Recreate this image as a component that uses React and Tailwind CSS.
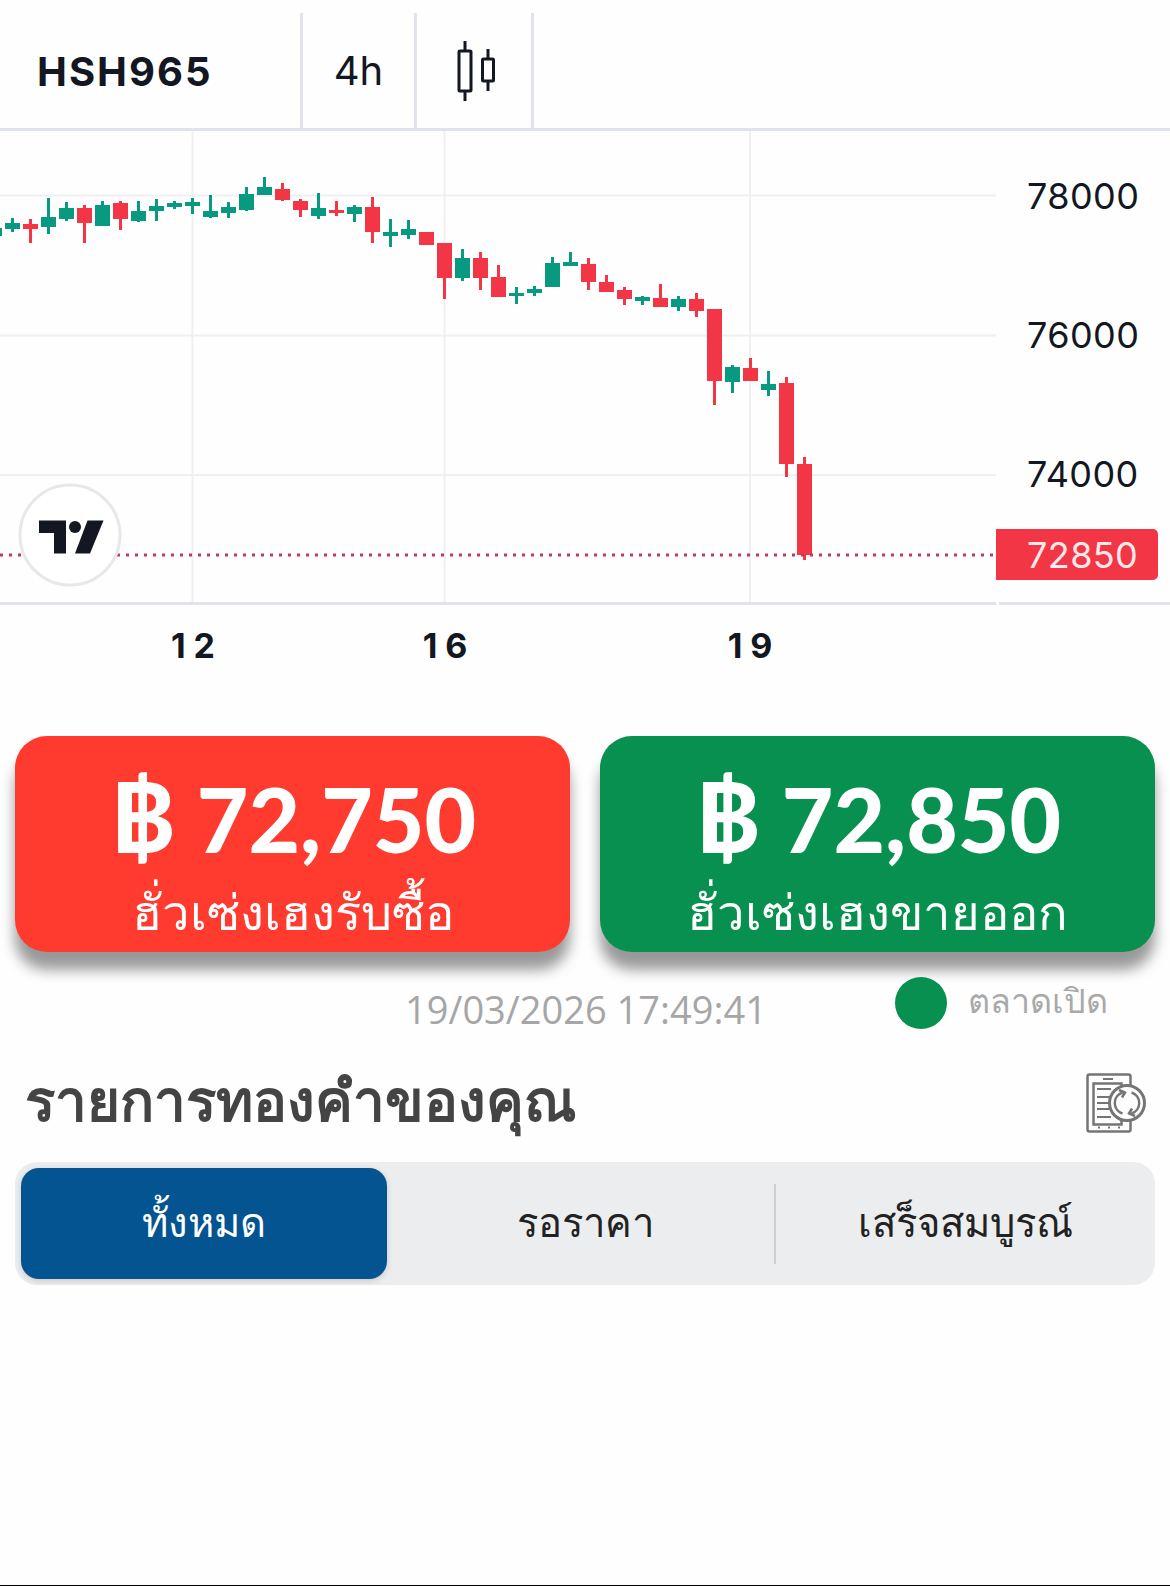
import React from "react";

// x index starts at -5.5 and steps 18px. [wickTop, wickBottom, bodyTop, bodyBottom, up]
const candles = [
  [227, 240, 228, 236, 1],
  [218, 232, 223, 229, 1],
  [219, 243, 224, 229, 0],
  [198, 234, 217, 227, 1],
  [202, 221, 208, 219, 1],
  [205, 243, 208, 223, 0],
  [201, 226, 205, 226, 1],
  [201, 230, 203, 219, 0],
  [201, 222, 211, 221, 1],
  [199, 221, 206, 211, 1],
  [201, 209, 203, 207, 1],
  [198, 214, 202, 206, 1],
  [195, 218, 211, 217, 1],
  [202, 218, 207, 213, 1],
  [187, 211, 194, 210, 1],
  [177, 195, 187, 195, 1],
  [183, 201, 189, 200, 0],
  [199, 217, 201, 210, 0],
  [193, 219, 208, 216, 1],
  [201, 216, 210, 213, 0],
  [205, 222, 207, 214, 1],
  [197, 243, 207, 232, 0],
  [219, 247, 232, 236, 1],
  [220, 239, 229, 235, 1],
  [232, 245, 232, 245, 0],
  [243, 299, 243, 278, 0],
  [249, 281, 258, 278, 1],
  [252, 290, 258, 278, 0],
  [265, 297, 277, 297, 0],
  [287, 304, 293, 296, 1],
  [286, 296, 289, 293, 1],
  [257, 287, 263, 287, 1],
  [252, 266, 262, 266, 1],
  [258, 290, 264, 282, 0],
  [275, 292, 282, 292, 0],
  [287, 305, 290, 299, 0],
  [296, 305, 297, 301, 1],
  [284, 307, 298, 307, 0],
  [296, 311, 299, 307, 1],
  [293, 317, 299, 311, 0],
  [309, 405, 309, 381, 0],
  [365, 393, 367, 382, 1],
  [358, 381, 368, 381, 0],
  [371, 396, 384, 390, 1],
  [377, 477, 383, 464, 0],
  [457, 560, 464, 555, 0],
];

const CandleChart = () => (
  <svg width="996" height="471" viewBox="0 131 996 471" className="block">
    {[195.5, 335.5, 475].map((y) => (
      <line key={y} x1="0" x2="996" y1={y} y2={y} stroke="#f0f0f3" strokeWidth="2" />
    ))}
    {[192.5, 444.5, 750].map((x) => (
      <line key={x} x1={x} x2={x} y1="131" y2="602" stroke="#f0f0f3" strokeWidth="2" />
    ))}
    {candles.map((c, i) => {
      const x = -5.5 + i * 18;
      const fill = c[4] ? "#089981" : "#f23645";
      return (
        <g key={i} fill={fill}>
          <rect x={x - 1.5} y={c[0]} width="3" height={c[1] - c[0]} />
          <rect x={x - 7.5} y={c[2]} width="15" height={c[3] - c[2]} />
        </g>
      );
    })}
    <line x1="0" x2="996" y1="555" y2="555" stroke="#c2395a" strokeWidth="3" strokeDasharray="3 6" />
    <circle cx="70" cy="535" r="50" fill="#ffffff" stroke="#e8e8ea" strokeWidth="3" />
    <path d="M39 520.5H66V553.5H54V533H39Z" fill="#131722" />
    <circle cx="75" cy="527" r="6" fill="#131722" />
    <path d="M87.5 520.5H103.5L90 553.5H75Z" fill="#131722" />
  </svg>
);

const CandleIcon = () => (
  <svg width="44" height="62" viewBox="0 0 44 62" fill="none" stroke="#131722" strokeWidth="3">
    <path d="M8 1V11M8 51V61M31 9V19M31 41V51" />
    <rect x="2" y="11" width="12" height="40" rx="1" />
    <rect x="25.500" y="19" width="11" height="22" rx="1" />
  </svg>
);

const SyncIcon = () => (
  <svg width="60" height="60" viewBox="0 0 60 60" fill="none" stroke="#757575" strokeWidth="2.5">
    <rect x="1.500" y="1.500" width="43" height="57" rx="2" />
    <rect x="7.500" y="10.500" width="28" height="41" />
    <path d="M17 6h10M11 16h14M11 24h12M11 30h12M11 36h12M11 44h14" strokeWidth="2" />
    <path d="M12 54.500h2M22 54.500h2M32 54.500h2" strokeWidth="2" />
    <circle cx="41" cy="30" r="17.500" fill="#fefefe" strokeWidth="3" />
    <path d="M36.500 40.500a11 11 0 0 1 0-21" />
    <path d="M45.500 19.500a11 11 0 0 1 0 21" />
    <path d="M33 17l6 2.500-3 5M49 43l-6-2.500 3-5" />
  </svg>
);

const PriceButton = ({ bg, price, label }) => (
  <div className={`flex h-[216px] w-[555px] flex-col items-center rounded-[32px] pt-[17px] text-white shadow-[0_18px_14px_rgba(0,0,0,0.4)] ${bg}`}>
    <div className="h-[125px] whitespace-nowrap text-[89px] font-black leading-[125px]">
      <span className="text-[98px]">฿</span> {price}
    </div>
    <div className="mt-[6px] text-[49px] font-extralight leading-[55px]">{label}</div>
  </div>
);

export default function App() {
  return (
    <div className="flex h-[1586px] w-[1170px] flex-col overflow-hidden bg-[#fefefe] font-['Lato','Noto_Sans',sans-serif] text-[#131722]">
      <div className="flex h-[131px] items-stretch border-b-[3px] border-[#e0e3eb] pt-[13px] font-['Inter',sans-serif]">
        <div className="flex w-[303px] items-center border-r-[3px] border-[#e0e3eb] pl-[37px] pt-[2px] text-[40px] font-bold tracking-[2px]">
          HSH965
        </div>
        <div className="flex w-[114px] items-center justify-center border-r-[3px] border-[#e0e3eb] text-[40px]">
          4h
        </div>
        <div className="flex w-[117px] items-center justify-center border-r-[3px] border-[#e0e3eb] pl-[9px]">
          <CandleIcon />
        </div>
      </div>

      <div className="flex h-[471px] items-start font-['Inter',sans-serif]">
        <CandleChart />
        <div className="flex w-[174px] flex-col text-[36px] leading-[51px]">
          <div className="mt-[40px] pl-[31px] tracking-[0.4px]">78000</div>
          <div className="mt-[88px] pl-[31px] tracking-[0.4px]">76000</div>
          <div className="mt-[88px] pl-[31px] tracking-[0.4px]">74000</div>
          <div className="mt-[29px] h-[51px] w-[162px] rounded-r-[5px] bg-[#f23645] pl-[31px] tracking-[0.4px] text-[#ffe9ea]">
            <div className="pt-px">72850</div>
          </div>
        </div>
      </div>

      <div className="flex h-[3px] gap-[3px]">
        <div className="w-[996px] bg-[#e0e3eb]" />
        <div className="flex-1 bg-[#e0e3eb]" />
      </div>

      <div className="flex h-[88px] items-center pb-[8px] font-['Inter',sans-serif] text-[34px] font-bold tracking-[8px]">
        <div className="ml-[167px] w-[60px] text-center">12</div>
        <div className="ml-[192px] w-[60px] text-center">16</div>
        <div className="ml-[245px] w-[60px] text-center">19</div>
      </div>

      <div className="mt-[43px] flex gap-[30px] pl-[15px]">
        <PriceButton bg="bg-[#ff3b30]" price="72,750" label="ฮั่วเซ่งเฮงรับซื้อ" />
        <PriceButton bg="bg-[#07904f]" price="72,850" label="ฮั่วเซ่งเฮงขายออก" />
      </div>

      <div className="mt-[24px] flex h-[54px] items-center">
        <div className="ml-[405px] mt-[12px] font-['Open_Sans',sans-serif] text-[38px] text-[#a6a6a6]">
          19/03/2026 17:49:41
        </div>
        <div className="ml-[128px] h-[52px] w-[52px] rounded-full bg-[#07904f]" />
        <div className="ml-[21px] pb-[8px] text-[34px] font-extralight text-[#a9a9a9]">ตลาดเปิด</div>
      </div>

      <div className="mt-[29px] flex h-[80px] items-center justify-between pl-[25px] pr-[24px]">
        <div className="text-[56.5px] font-bold text-[#444444]">รายการทองคำของคุณ</div>
        <div className="mt-[7px]">
          <SyncIcon />
        </div>
      </div>

      <div className="mx-[15px] mt-[23px] flex h-[123px] items-center rounded-[22px] bg-[#ecedef] pl-[6px] text-[40px] font-light text-[#222222]">
        <div className="flex h-[111px] w-[366px] items-center justify-center rounded-[18px] bg-[#045491] pb-[3px] font-extralight text-white shadow-[0_2px_6px_rgba(0,0,0,0.15)]">
          ทั้งหมด
        </div>
        <div className="flex h-[80px] w-[389px] items-center justify-center border-r-2 border-[#cfcfd2] pb-[3px] pl-[10px]">รอราคา</div>
        <div className="flex flex-1 items-center justify-center pb-[3px]">เสร็จสมบูรณ์</div>
      </div>

      <div className="mt-auto h-px bg-black" />
    </div>
  );
}
